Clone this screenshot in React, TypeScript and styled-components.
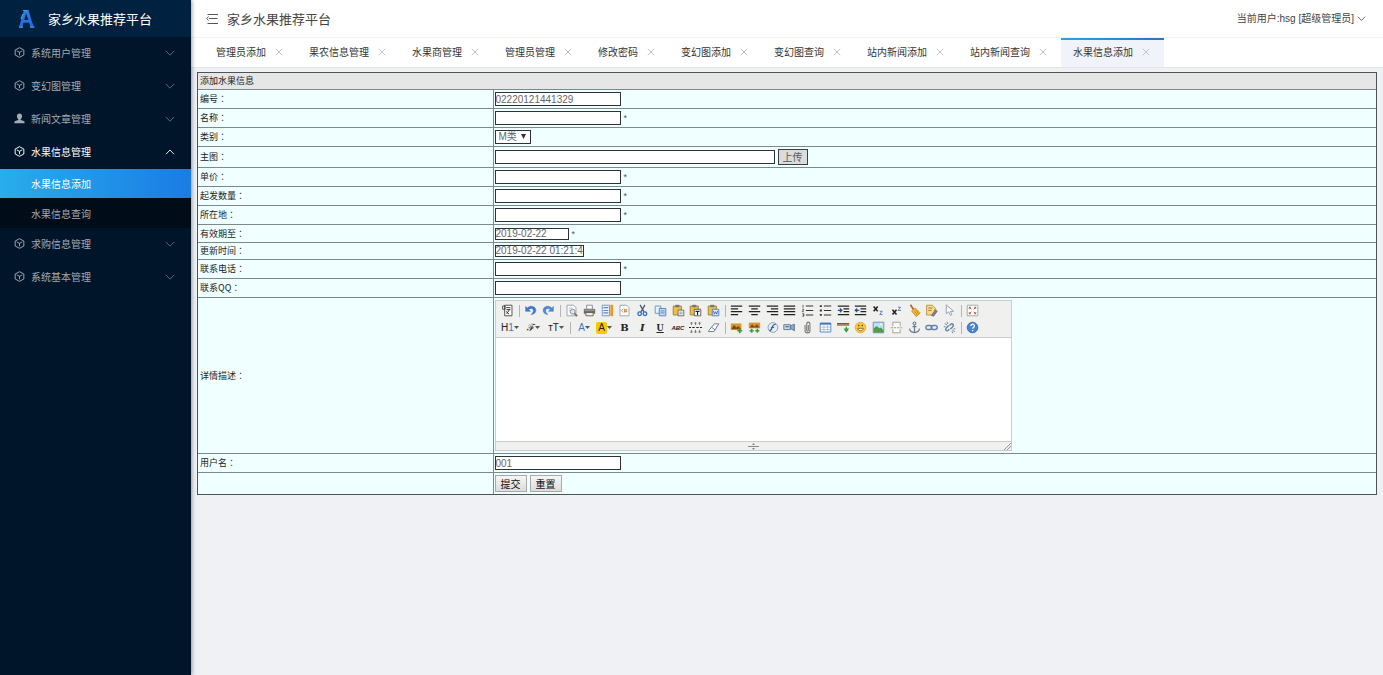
import React from 'react';
import styled, { createGlobalStyle, css } from 'styled-components';

const sans = `"Liberation Sans", "Noto Sans CJK SC", sans-serif`;
const cjk = `"Noto Sans CJK SC", sans-serif`;

const GlobalStyle = createGlobalStyle`
  *, *::before, *::after { box-sizing: border-box; }
  body { margin: 0; background: #eff1f5; font: 10px/14px ${sans}; color: #333; }
  button, input, select, textarea { font: inherit; color: inherit; margin: 0; }
  ul { list-style: none; margin: 0; padding: 0; }
  a { color: inherit; text-decoration: none; }
  svg { display: block; flex: none; }
`;

const Shell = styled.div`
  display: flex;
  min-height: 100vh;
`;

/* ---------- sidebar ---------- */

const Sidebar = styled.nav`
  position: relative;
  z-index: 1;
  flex: 0 0 191px;
  background: #001529;
  color: #a2abb4;
  box-shadow: 1px 0 4px rgba(0, 21, 41, 0.4);
`;

const Brand = styled.div`
  display: flex;
  align-items: center;
  gap: 13px;
  height: 37px;
  padding-left: 18px;
  background: #002140;
  color: #fff;
  font: 13px/20px ${cjk};
`;

const MenuLink = styled.a<{ $open?: boolean }>`
  display: flex;
  align-items: center;
  gap: 6px;
  height: 33px;
  padding: 0 16px 2px 14px;
  font-family: ${cjk};
  color: ${(p) => (p.$open ? '#fff' : 'inherit')};
`;

const MenuText = styled.span`
  flex: 1;
`;

const SubMenu = styled.ul`
  display: grid;
  gap: 1px;
  background: #000c17;
`;

const SubLink = styled.a<{ $active?: boolean }>`
  display: flex;
  align-items: center;
  height: 29px;
  padding-left: 31px;
  font-family: ${cjk};
  ${(p) =>
    p.$active &&
    css`
      color: #fff;
      background: linear-gradient(90deg, #29adeb, #1a7ce4);
    `}
`;

/* ---------- top area ---------- */

const Main = styled.main`
  flex: 1;
  min-width: 0;
`;

const TopBar = styled.header`
  display: flex;
  align-items: center;
  height: 38px;
  padding: 0 17px 0 15px;
  background: #fff;
  border-bottom: 1px solid #f3f3f3;
`;

const IconButton = styled.button`
  display: flex;
  align-items: center;
  justify-content: center;
  padding: 0;
  border: 0;
  background: none;
`;

const Title = styled.h1`
  flex: 1;
  margin: 0 0 0 9px;
  font: 13px/20px ${cjk};
  color: #444;
`;

const UserButton = styled(IconButton)`
  gap: 3px;
  color: #444;
`;

const TabBar = styled.div`
  display: flex;
  height: 30px;
  padding-left: 13px;
  background: #fff;
  border-bottom: 1px solid #e3e5e8;
`;

const Tab = styled.div<{ $active?: boolean }>`
  display: flex;
  align-items: center;
  justify-content: space-between;
  padding: 0 14px 1px 12px;
  gap: 9px;
  color: #333;
  font-family: ${cjk};
  ${(p) =>
    p.$active &&
    css`
      background: linear-gradient(90deg, #2ba5dc, #2f73b9) top / 100% 2px no-repeat #f0f3f9;
    `}
`;

/* ---------- form table ---------- */

const Content = styled.form`
  padding: 4px 6px;
`;

const FormTable = styled.table`
  width: 100%;
  table-layout: fixed;
  border: 1px solid #4c5454;
  border-spacing: 0;
  background: #f0ffff;
  font-size: 9px;
  line-height: 12px;
  color: #222;

  th, td { padding: 0 2px; font-weight: normal; text-align: left; }
  th { font-family: ${cjk}; }
  td { padding-left: 1px; border-left: 1px solid #7d8a8a; }
  tr + tr > * { border-top: 1px solid #7d8a8a; }
`;

const Row = styled.tr<{ $height: number }>`
  height: ${(p) => p.$height}px;
`;

const CaptionCell = styled.th`
  background: #e6e6e6;
`;

const LabelCell = styled.th`
  width: 25%;
`;

/* The TC face centres the full-width colon in its cell. */
const Colon = styled.span`
  font-family: "Noto Sans CJK TC", sans-serif;
`;

const Field = styled.div`
  display: flex;
  align-items: center;
  gap: 3px;
`;

const TextInput = styled.input<{ $width: number; $slim?: boolean }>`
  width: ${(p) => p.$width}px;
  height: ${(p) => (p.$slim ? 12 : 14)}px;
  padding: 0;
  border: 1px solid #2c3236;
  border-radius: 0;
  background: #fff;
  color: #666;
  font-size: 10px;
  line-height: 12px;
`;

const SelectBox = styled.span`
  position: relative;

  svg { position: absolute; right: 5px; top: 4px; pointer-events: none; }
`;

const Select = styled.select`
  display: block;
  appearance: none;
  width: 36px;
  height: 14px;
  padding: 0 0 0 3px;
  border: 1px solid #2c3236;
  border-radius: 0;
  background: #fff;
  color: #666;
  font-size: 10px;
  line-height: 12px;
`;

const UploadButton = styled.button`
  width: 30px;
  height: 16px;
  padding: 0;
  border: 1px solid #3a3f42;
  background: #dcdcdc;
  color: #555;
  font: 10px/12px ${cjk};
`;

const FormButton = styled.button`
  width: 32px;
  height: 17px;
  padding: 0;
  border: 1px solid #a9a9a9;
  background: linear-gradient(#f6f6f6, #dcdcdc);
  color: #111;
  font: 10px/12px ${cjk};
`;

const Star = styled.span`
  color: #555;
  font-size: 9px;
`;

/* ---------- rich text editor ---------- */

const Editor = styled.div`
  display: flex;
  flex-direction: column;
  width: 517px;
  max-width: 100%;
  border: 1px solid #ccc;
`;

const Toolbar = styled.div`
  padding: 1px 6px;
  background: #f0f0ee;
  border-bottom: 1px solid #ccc;
`;

const ToolRow = styled.div`
  display: flex;
  align-items: center;
  height: 17px;
`;

const Group = styled.div<{ $width: number }>`
  display: flex;
  justify-content: space-between;
  width: ${(p) => p.$width}px;

  & + & { margin-left: 6px; }
`;

const Divider = styled.span`
  width: 1px;
  height: 12px;
  margin: 0 5px;
  background: #b4b4b4;
`;

const Tool = styled(IconButton)<{ $wide?: boolean }>`
  width: ${(p) => (p.$wide ? 17 : 12)}px;
  height: 12px;
  white-space: nowrap;
  color: #222;
  line-height: 12px;
`;

const Glyph = styled.span<{ $look?: 'bold' | 'italic' | 'underline' | 'tiny' | 'blue' | 'mark' | 'script' }>`
  font-size: 10px;
  line-height: 12px;
  ${(p) => p.$look === 'bold' && 'font-family: "DejaVu Serif", serif; font-weight: bold;'}
  ${(p) => p.$look === 'italic' && 'font-family: "DejaVu Serif", serif; font-weight: bold; font-style: italic;'}
  ${(p) => p.$look === 'underline' && 'font-family: "Liberation Serif", serif; font-weight: bold; text-decoration: underline;'}
  ${(p) => p.$look === 'tiny' && 'font-size: 6px; font-weight: bold; font-style: italic;'}
  ${(p) => p.$look === 'blue' && 'color: #3d78c4;'}
  ${(p) => p.$look === 'mark' && 'width: 11px; background: #fbc800; border-radius: 2px; text-align: center;'}
  ${(p) => p.$look === 'script' && 'font-family: "DejaVu Serif", serif;'}
`;

const EditArea = styled.textarea`
  display: block;
  width: 100%;
  height: 103px;
  padding: 4px;
  border: 0;
  resize: none;
  background: #fff;
`;

const StatusBar = styled.div`
  display: flex;
  justify-content: space-between;
  align-items: center;
  height: 9px;
  background: #f0f0ee;
  border-top: 1px solid #ccc;
`;

const StatusSpacer = styled.span`
  width: 8px;
`;

/* ---------- drawings ---------- */

const Chevron = ({ up, size = 9, faint }: { up?: boolean; size?: number; faint?: boolean }) => (
  <svg width={size} height={size} viewBox="0 0 10 10" fill="none" stroke="currentColor" strokeWidth="1" opacity={faint ? 0.55 : 0.9}>
    <path d={up ? 'M1 7.2 5 3l4 4.2' : 'M1 3l4 4.2L9 3'} />
  </svg>
);

const Cube = () => (
  <svg width="11" height="11" viewBox="0 0 16 16" fill="none" stroke="currentColor" strokeWidth="1.4" strokeLinejoin="round">
    <path d="M8 1l6.3 3.4v7.2L8 15l-6.3-3.4V4.4zM4 5.6l4 2.2 4-2.2M8 7.8V12" />
  </svg>
);

const Person = () => (
  <svg width="11" height="11" viewBox="0 0 16 16" fill="currentColor">
    <path d="M8 .8c2.300 0 3.700 1.600 3.700 3.800 0 1.700-.8 3.500-1.900 4.300v1.200l4.400 1.700c.8.300 1.200.9 1.200 1.700v1.300H.6v-1.300c0-.8.4-1.400 1.200-1.700l4.400-1.700V8.900C5.100 8.100 4.300 6.300 4.300 4.600 4.300 2.400 5.700.8 8 .8z" />
  </svg>
);

const Close = () => (
  <svg width="8" height="8" viewBox="0 0 8 8" stroke="#c4c4c4" strokeWidth="1">
    <path d="M.8.800l6.400 6.400M7.200.8L.8 7.200" />
  </svg>
);

const Logo = () => (
  <svg width="17" height="20" viewBox="0 0 17 20" fill="none">
    <defs>
      <linearGradient id="brand" x1="0" y1="0" x2="0" y2="1">
        <stop offset="0" stopColor="#2f7fe6" />
        <stop offset="1" stopColor="#2468d6" />
      </linearGradient>
    </defs>
    <path d="M6 1h4.500l1.500 5 1.500 5.500L16 18h-3.500l-1.400-4.300H5.600L4.300 18H1l2.500-8z" fill="url(#brand)" />
    <path d="M8.200 4.200L6.300 11h4z" fill="#002140" />
    <path d="M1 18.200h4M12 18.200h4.500M5 1.500h4M3 10l2-5" stroke="#3ea2f4" strokeWidth="1.200" />
  </svg>
);

const Fold = () => (
  <svg width="12" height="12" viewBox="0 0 12 12" fill="none" stroke="#555" strokeWidth="1">
    <path d="M1.500 1.500H12M3 5.500h8.500M1.500 10.500H12M2.500 3.500L.8 5.500l1.700 2" />
  </svg>
);

const Caret = () => (
  <svg width="5" height="3" viewBox="0 0 5 3" fill="#555">
    <path d="M0 0h5L2.500 3z" />
  </svg>
);

const lines = (d: string) => <path d={d} stroke="#222" strokeWidth="1.600" fill="none" />;

const clipboard = (
  <>
    <path d="M1.500 2.500h10v11h-10z" fill="#e8c14c" stroke="#9a7520" />
    <path d="M4 1h5v3H4z" fill="#777" />
  </>
);

const page = <path d="M2.500 1.500h8l3 3v10h-11z" fill="#fff" stroke="#8a97a8" />;

const art: Record<string, React.ReactNode> = {
  source: (
    <>
      <path d="M4.500 1.500h9v13h-9zM2 2.500h3v4H2z" fill="#fff" stroke="#333" />
      <path d="M6.500 4.500h5M6.500 7h5M6 9l4 3.500M11 6L7 12" stroke="#333" strokeWidth="1.200" fill="none" />
    </>
  ),
  undo: <path d="M2 3v6h6L5.800 6.800C9 4 12 6 11.500 9c-.2 1.800-1.500 3-3 4C13 12.500 15 10 14.500 7 14 3 8 1 4 5z" fill="#3f78d0" stroke="#2d5fae" strokeWidth=".5" />,
  redo: <path d="M14 3v6H8l2.200-2.200C7 4 4 6 4.500 9c.2 1.800 1.500 3 3 4C3 12.500 1 10 1.500 7 2 3 8 1 12 5z" fill="#4a8add" stroke="#2d5fae" strokeWidth=".5" />,
  preview: (
    <>
      {page}
      <path d="M4.500 5h5M4.500 7.500h3" stroke="#9bb0cc" />
      <circle cx="9.500" cy="9.500" r="3" fill="#d5e8fa" stroke="#778" />
      <path d="M11.500 11.500l3.500 3.500" stroke="#8a6a40" strokeWidth="2" />
    </>
  ),
  print: (
    <>
      <path d="M4.500 1.500h7v5h-7z" fill="#fff" stroke="#777" />
      <path d="M1 6h14v6H1z" fill="#6e6e6e" />
      <path d="M3.500 10.500h9v4h-9z" fill="#eee" stroke="#555" />
      <path d="M2 7.500h12" stroke="#bbb" />
    </>
  ),
  template: (
    <>
      <path d="M1.500 1.500h9v13h-9z" fill="#e9f2fb" stroke="#5d87bd" />
      <path d="M3 4.500h6M3 8h6M3 11h6" stroke="#5d87bd" strokeWidth="1.500" />
      <path d="M11.500 1H15v14h-3.500z" fill="#e29a2e" />
    </>
  ),
  code: (
    <>
      {page}
      <path d="M6.500 6L4 8.200l2.500 2.300M8 6v4.500M10 6v4.500M7.500 7.200h4M7.500 9.300h4" stroke="#d57a3a" fill="none" />
    </>
  ),
  cut: (
    <>
      <path d="M5 1l5 9M11 1l-5 9" stroke="#4d5c74" strokeWidth="1.600" />
      <circle cx="4.500" cy="12" r="2.200" fill="none" stroke="#2f6bc4" strokeWidth="1.600" />
      <circle cx="11" cy="12" r="2.200" fill="none" stroke="#2f6bc4" strokeWidth="1.600" />
    </>
  ),
  copy: (
    <>
      <path d="M1.500 2.500h7v9h-7z" fill="#e6f0fb" stroke="#5c88c4" />
      <path d="M6.500 5.500h8v9h-8z" fill="#c9dff6" stroke="#3f70b5" />
      <path d="M8 8.500h5M8 11h5" stroke="#3f70b5" />
    </>
  ),
  paste: (
    <>
      {clipboard}
      <path d="M7.500 7.500h7v7h-7z" fill="#fff" stroke="#555" />
      <path d="M9 10h4M9 12h4" stroke="#777" />
    </>
  ),
  plainpaste: (
    <>
      {clipboard}
      <path d="M6.500 6.500h8v8h-8z" fill="#fff" stroke="#444" />
      <path d="M8 9h5M10.500 9v4.500" stroke="#222" strokeWidth="1.500" />
    </>
  ),
  wordpaste: (
    <>
      {clipboard}
      <path d="M6.500 6.500h8v8h-8z" fill="#e3eefb" stroke="#3f70b5" />
      <path d="M8 8.500l1 4 1.500-3 1.500 3 1-4" stroke="#2a58a5" fill="none" />
    </>
  ),
  left: lines('M1 2.500h14M1 6h9M1 9.500h14M1 13h9'),
  center: lines('M1 2.500h14M4 6h8M1 9.500h14M4 13h8'),
  right: lines('M1 2.500h14M6 6h9M1 9.500h14M6 13h9'),
  justify: lines('M1 2.500h14M1 6h14M1 9.500h14M1 13h14'),
  ordered: (
    <>
      <path d="M6 2.500h9M6 8h9M6 13.500h9" stroke="#333" strokeWidth="1.300" />
      <path d="M2.500 1v3.500M1.500 6.500h2L1.500 9.500h2M1.500 12h2v1.500h-1 1V15h-2" stroke="#444" fill="none" />
    </>
  ),
  unordered: (
    <>
      <path d="M6 2.500h9M6 8h9M6 13.500h9" stroke="#333" strokeWidth="1.300" />
      <path d="M1 2.500h2.500M1 8h2.500M1 13.500h2.500" stroke="#333" strokeWidth="2.200" />
    </>
  ),
  indent: (
    <>
      <path d="M1 2.500h14M8 6h7M8 9.500h7M1 13h14" stroke="#222" strokeWidth="1.500" />
      <path d="M1 7.800h5M3.500 5.500l2.500 2.300-2.500 2.300" stroke="#2b4f8f" strokeWidth="1.500" fill="none" />
    </>
  ),
  outdent: (
    <>
      <path d="M1 2.500h14M8 6h7M8 9.500h7M1 13h14" stroke="#222" strokeWidth="1.500" />
      <path d="M1.500 7.800h5M4 5.500L1.500 7.800 4 10" stroke="#2b4f8f" strokeWidth="1.500" fill="none" />
    </>
  ),
  sub: (
    <>
      <path d="M2 3l5 6M7 3L2 9" stroke="#222" strokeWidth="1.900" />
      <path d="M9.500 9h3l-3 4h3.500" stroke="#3a6cb8" fill="none" />
    </>
  ),
  sup: (
    <>
      <path d="M3 7l5 6M8 7l-5 6" stroke="#222" strokeWidth="1.900" />
      <path d="M10 4h3l-3 4h3.500" stroke="#3a6cb8" fill="none" />
    </>
  ),
  broom: (
    <>
      <path d="M3 1l4 6" stroke="#a8622a" strokeWidth="2" />
      <path d="M4.500 8.500L9 5l6 6-5 4.500z" fill="#f0b732" stroke="#c98a1c" />
      <path d="M8 9l4 5M10 8l3 4" stroke="#c98a1c" />
    </>
  ),
  quickformat: (
    <>
      <path d="M2 1.500h7l4 4-3 8H2z" fill="#f6dc8a" stroke="#b08628" />
      <path d="M4 5h5M4 8h4" stroke="#8a6a22" />
      <path d="M8 14l5-7 2 2-4.500 6z" fill="#8a7ab8" stroke="#665" />
    </>
  ),
  selectall: <path d="M4 1v11l3-2.500L9 14l2-1-2-4h4z" fill="#fff" stroke="#8090a4" />,
  fullscreen: (
    <>
      <path d="M1.500 1.500h13v13h-13z" fill="#fff" stroke="#999" />
      <path d="M4 6V4h2M10 4h2v2M12 10v2h-2M6 12H4v-2M4 4l2.500 2.500M12 4L9.500 6.500M12 12L9.500 9.500M4 12l2.500-2.500" stroke="#b03a3a" fill="none" />
    </>
  ),
  lineheight: (
    <>
      <path d="M0 8h2.500M4 8h3M9 8h3M13.500 8H16" stroke="#222" strokeWidth="1.500" />
      <path d="M3 1.500V5M8 1.500V5M13 1.500V5M3 11v3.500M8 11v3.500M13 11v3.500M1.500 2.500h3M6.500 2.500h3M11.500 2.500h3M1.500 13.500h3M6.500 13.500h3M11.500 13.500h3" stroke="#666" strokeWidth="1" />
    </>
  ),
  eraser: <path d="M2 12l7-8.500h5.500L8.500 13H2zM6 8l4 3" fill="#fff" stroke="#667a92" strokeWidth="1.200" />,
  image: (
    <>
      <path d="M1 3h13v8H1z" fill="#d9962e" />
      <path d="M2 9l3-4 3 3 2-2 3 3v1H2z" fill="#7a4a1c" />
      <path d="M9 12h6M12 9v6" stroke="#2f9e34" strokeWidth="2" />
    </>
  ),
  multiimage: (
    <>
      <path d="M1 2h14v7H1z" fill="#d9962e" />
      <path d="M2 8l3-4 3 3 3-3 3 4z" fill="#7a4a1c" />
      <path d="M2 12h5M4.500 9.500v5M9 12h5M11.500 9.500v5" stroke="#2f9e34" strokeWidth="1.800" />
    </>
  ),
  flash: (
    <>
      <circle cx="8.500" cy="8" r="6" fill="#e6eef6" stroke="#7a8fa8" />
      <path d="M12 4c-3 0-4 2-4.500 4S6 12 4 12M6 8h4" stroke="#3d6594" strokeWidth="1.500" fill="none" />
    </>
  ),
  media: (
    <>
      <path d="M1 4.500h8v6H1z" fill="#cfdce9" stroke="#4c6784" />
      <path d="M9 6l5-2v8l-5-3z" fill="#8fa9c4" stroke="#4c6784" />
      <path d="M3 7h4" stroke="#4c6784" strokeWidth="1.500" />
    </>
  ),
  file: <path d="M5 5v7c0 3.500 6 3.500 6 0V4c0-3.500-4-3.500-4 0v7.500c0 1.500 2 1.500 2 0V5" fill="none" stroke="#777" strokeWidth="1.300" />,
  table: (
    <>
      <path d="M1.500 2.500h13v11h-13z" fill="#fff" stroke="#3d6fb8" />
      <path d="M1.500 3.500h13" stroke="#3d6fb8" strokeWidth="2" />
      <path d="M1.500 7.500h13M1.500 10.500h13M6 4v9.500M10.500 4v9.500" stroke="#9dbbe2" />
    </>
  ),
  hr: (
    <>
      <path d="M0 3.500h15" stroke="#8c4a2a" strokeWidth="2" />
      <path d="M0 5.500h15" stroke="#5da05a" />
      <path d="M11.500 7v3M9.500 10l2 3 2-3z" stroke="#2f9e34" fill="#2f9e34" strokeWidth="1.500" />
    </>
  ),
  smile: (
    <>
      <circle cx="8" cy="8" r="6.500" fill="#fbc83a" stroke="#e3a828" />
      <path d="M4.500 9c1 4 6 4 7 0z" fill="#fff" stroke="#8a5a10" />
      <path d="M5.800 4.500v2M10.200 4.500v2" stroke="#5a3a08" strokeWidth="1.500" />
    </>
  ),
  map: (
    <>
      <path d="M1.500 1.500h13v13h-13z" fill="#bfe0f8" stroke="#5a86ac" />
      <path d="M2 14V9l4-3 3 3 2-1 3 3v3z" fill="#4f9d4a" />
      <path d="M10 3h3v2h-3z" fill="#fff6a8" />
    </>
  ),
  pagebreak: <path d="M3.500 6.500v-5h9v5M3.500 10v4.500h9V10M1 8.200h2.500M5 8.200h2.500M9 8.200h2.500M13 8.200h2" fill="#fff" stroke="#a0a0a0" strokeWidth="1.200" />,
  anchor: (
    <>
      <circle cx="8" cy="3" r="1.700" fill="none" stroke="#6b7d92" strokeWidth="1.300" />
      <path d="M8 5v9M5.500 7h5M1.800 9.500c.7 3.500 3.500 4.700 6.200 4.700s5.500-1.200 6.200-4.700" fill="none" stroke="#6b7d92" strokeWidth="1.500" />
    </>
  ),
  link: (
    <>
      <rect x="1" y="5.500" width="7.500" height="5" rx="2.500" fill="none" stroke="#6480a4" strokeWidth="1.700" />
      <rect x="7.500" y="5.500" width="7.500" height="5" rx="2.500" fill="none" stroke="#6480a4" strokeWidth="1.700" />
    </>
  ),
  unlink: (
    <>
      <path d="M7 5.500L4 8.500c-2 2 .5 5 2.500 3l1.500-1.500M9 10l3-3c2-2-.5-5-2.500-3L8 5.500" fill="none" stroke="#6480a4" strokeWidth="1.700" />
      <path d="M2 3l3 2M5 1l1 2.500M11 12.500l1 2.500M11.500 11l3 2M1 7h2M13 9.500h2" stroke="#6480a4" strokeWidth="1.200" />
    </>
  ),
  about: (
    <>
      <circle cx="8" cy="8" r="6.500" fill="#4584d8" stroke="#2a5fae" />
      <path d="M5.800 6.300c0-3 4.600-3 4.600-.3 0 1.700-2.200 1.700-2.200 3.500M8.200 11v1.700" fill="none" stroke="#fff" strokeWidth="1.600" />
    </>
  ),
};

const IconTool = ({ name }: { name: string }) => (
  <Tool type="button" aria-label={name}>
    <svg width="13" height="13" viewBox="0 0 16 16">{art[name]}</svg>
  </Tool>
);

const IconGroup = ({ width, names }: { width: number; names: string[] }) => (
  <Group $width={width}>
    {names.map((n) => (
      <IconTool key={n} name={n} />
    ))}
  </Group>
);

/* ---------- data ---------- */

const menu = [
  { text: '系统用户管理' },
  { text: '变幻图管理' },
  { text: '新闻文章管理', person: true },
  { text: '水果信息管理', children: ['水果信息添加', '水果信息查询'] },
  { text: '求购信息管理' },
  { text: '系统基本管理' },
];

const tabs = ['管理员添加', '果农信息管理', '水果商管理', '管理员管理', '修改密码', '变幻图添加', '变幻图查询', '站内新闻添加', '站内新闻查询', '水果信息添加'];

type RowProps = { id: string; label: string; height?: number; children: React.ReactNode };

const FormRow = ({ id, label, height = 19, children }: RowProps) => (
  <Row $height={height}>
    <LabelCell scope="row">
      <label htmlFor={id}>
        {label}
        <Colon>：</Colon>
      </label>
    </LabelCell>
    <td>
      <Field>{children}</Field>
    </td>
  </Row>
);

type TextRowProps = { id: string; label: string; value?: string; required?: boolean; width?: number; slim?: boolean; height?: number };

const TextRow = ({ id, label, value = '', required, width = 126, slim, height }: TextRowProps) => (
  <FormRow id={id} label={label} height={height}>
    <TextInput id={id} defaultValue={value} $width={width} $slim={slim} />
    {required && <Star>*</Star>}
  </FormRow>
);

const RichEditor = () => (
  <Editor>
    <Toolbar>
      <ToolRow>
        <IconGroup width={12} names={['source']} />
        <Divider />
        <IconGroup width={30} names={['undo', 'redo']} />
        <Divider />
        <IconGroup width={154} names={['preview', 'print', 'template', 'code', 'cut', 'copy', 'paste', 'plainpaste', 'wordpaste']} />
        <Divider />
        <IconGroup
          width={225}
          names={['left', 'center', 'right', 'justify', 'ordered', 'unordered', 'indent', 'outdent', 'sub', 'sup', 'broom', 'quickformat', 'selectall']}
        />
        <Divider />
        <IconGroup width={12} names={['fullscreen']} />
      </ToolRow>
      <ToolRow>
        <Group $width={63}>
          <Tool type="button" $wide>
            <Glyph>H</Glyph>
            <Glyph $look="blue">1</Glyph>
            <Caret />
          </Tool>
          <Tool type="button" $wide>
            <Glyph $look="script">ℱ</Glyph>
            <Caret />
          </Tool>
          <Tool type="button" $wide>
            <Glyph>тT</Glyph>
            <Caret />
          </Tool>
        </Group>
        <Divider />
        <Group $width={37}>
          <Tool type="button" $wide>
            <Glyph $look="blue">A</Glyph>
            <Caret />
          </Tool>
          <Tool type="button" $wide>
            <Glyph $look="mark">A</Glyph>
            <Caret />
          </Tool>
        </Group>
        <Group $width={101}>
          <Tool type="button">
            <Glyph $look="bold">B</Glyph>
          </Tool>
          <Tool type="button">
            <Glyph $look="italic">I</Glyph>
          </Tool>
          <Tool type="button">
            <Glyph $look="underline">U</Glyph>
          </Tool>
          <Tool type="button">
            <Glyph $look="tiny">ABC</Glyph>
          </Tool>
          <IconTool name="lineheight" />
          <IconTool name="eraser" />
        </Group>
        <Divider />
        <IconGroup
          width={225}
          names={['image', 'multiimage', 'flash', 'media', 'file', 'table', 'hr', 'smile', 'map', 'pagebreak', 'anchor', 'link', 'unlink']}
        />
        <Divider />
        <IconGroup width={12} names={['about']} />
      </ToolRow>
    </Toolbar>
    <EditArea id="detail" />
    <StatusBar>
      <StatusSpacer />
      <svg width="11" height="7" viewBox="0 0 11 7" fill="#888">
        <path d="M0 3h11v1H0zM5.500 0L7 2H4zM5.500 7L4 5h3z" />
      </svg>
      <svg width="8" height="8" viewBox="0 0 8 8" stroke="#999">
        <path d="M1 8l7-7M4 8l4-4" />
      </svg>
    </StatusBar>
  </Editor>
);

export default function App() {
  return (
    <>
      <GlobalStyle />
      <Shell>
        <Sidebar>
          <Brand>
            <Logo />
            家乡水果推荐平台
          </Brand>
          <ul>
            {menu.map((m) => (
              <li key={m.text}>
                <MenuLink href="#" $open={!!m.children}>
                  {m.person ? <Person /> : <Cube />}
                  <MenuText>{m.text}</MenuText>
                  <Chevron up={!!m.children} size={10} faint={!m.children} />
                </MenuLink>
                {m.children && (
                  <SubMenu>
                    {m.children.map((c, i) => (
                      <li key={c}>
                        <SubLink href="#" $active={i === 0}>{c}</SubLink>
                      </li>
                    ))}
                  </SubMenu>
                )}
              </li>
            ))}
          </ul>
        </Sidebar>
        <Main>
          <TopBar>
            <IconButton type="button" aria-label="收起菜单">
              <Fold />
            </IconButton>
            <Title>家乡水果推荐平台</Title>
            <UserButton type="button">
              当前用户:hsg [超级管理员]
              <Chevron />
            </UserButton>
          </TopBar>
          <TabBar>
            {tabs.map((t, i) => (
              <Tab key={t} $active={i === tabs.length - 1}>
                {t}
                <IconButton type="button" aria-label="关闭">
                  <Close />
                </IconButton>
              </Tab>
            ))}
          </TabBar>
          <Content>
            <FormTable>
              <colgroup>
                <col width="25%" />
                <col />
              </colgroup>
              <tbody>
                <Row $height={16}>
                  <CaptionCell colSpan={2}>添加水果信息</CaptionCell>
                </Row>
                <TextRow id="number" label="编号" value="02220121441329" />
                <TextRow id="name" label="名称" required />
                <FormRow id="category" label="类别">
                  <SelectBox>
                    <Select id="category" defaultValue="M类">
                      <option>M类</option>
                    </Select>
                    <svg width="5" height="5" viewBox="0 0 5 5" fill="#333">
                      <path d="M0 0h5L2.500 5z" />
                    </svg>
                  </SelectBox>
                </FormRow>
                <FormRow id="picture" label="主图" height={21}>
                  <TextInput id="picture" defaultValue="" $width={280} />
                  <UploadButton type="button">上传</UploadButton>
                </FormRow>
                <TextRow id="price" label="单价" required />
                <TextRow id="minimum" label="起发数量" required />
                <TextRow id="place" label="所在地" required />
                <TextRow id="expires" label="有效期至" value="2019-02-22" required width={74} slim height={18} />
                <TextRow id="updated" label="更新时间" value="2019-02-22 01:21:44" width={89} slim height={17} />
                <TextRow id="phone" label="联系电话" required />
                <TextRow id="qq" label="联系QQ" />
                <FormRow id="detail" label="详情描述" height={156}>
                  <RichEditor />
                </FormRow>
                <TextRow id="user" label="用户名" value="001" />
                <Row $height={22}>
                  <LabelCell />
                  <td>
                    <Field>
                      <FormButton type="submit">提交</FormButton>
                      <FormButton type="reset">重置</FormButton>
                    </Field>
                  </td>
                </Row>
              </tbody>
            </FormTable>
          </Content>
        </Main>
      </Shell>
    </>
  );
}
